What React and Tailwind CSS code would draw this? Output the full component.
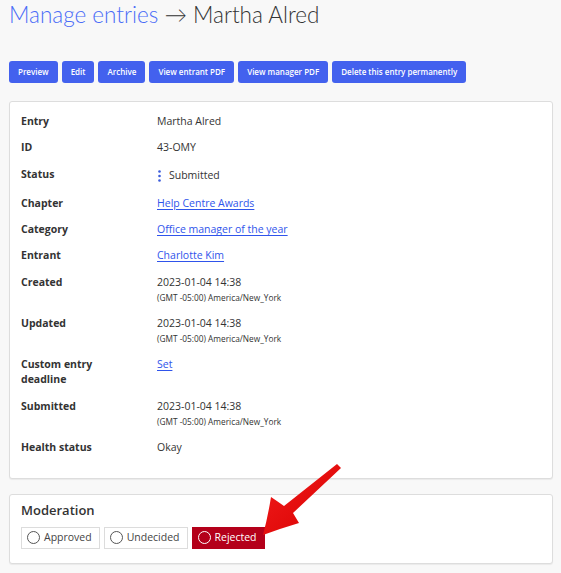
import React from 'react';

const rows = [
  { label: 'Entry', value: 'Martha Alred' },
  { label: 'ID', value: '43-OMY' },
  { label: 'Status', status: 'Submitted' },
  { label: 'Chapter', link: 'Help Centre Awards' },
  { label: 'Category', link: 'Office manager of the year' },
  { label: 'Entrant', link: 'Charlotte Kim' },
  { label: 'Created', date: '2023-01-04 14:38' },
  { label: 'Updated', date: '2023-01-04 14:38' },
  { label: 'Custom entry deadline', link: 'Set' },
  { label: 'Submitted', date: '2023-01-04 14:38' },
  { label: 'Health status', value: 'Okay' },
];

const buttons = ['Preview', 'Edit', 'Archive', 'View entrant PDF', 'View manager PDF', 'Delete this entry permanently'];

function Value({ row }) {
  if (row.status) {
    return (
      <div className="flex items-center h-[18px] gap-[8px]">
        <svg width="3" height="12" viewBox="0 0 3 12" className="ml-[1px]">
          <circle cx="1.5" cy="1.5" r="1.3" fill="#3b5bdb" />
          <circle cx="1.5" cy="6" r="1.3" fill="#3b5bdb" />
          <circle cx="1.5" cy="10.5" r="1.3" fill="#3b5bdb" />
        </svg>
        <span>{row.status}</span>
      </div>
    );
  }
  if (row.link) {
    return <a href="#" className="text-[#2f54eb] underline underline-offset-[2px]">{row.link}</a>;
  }
  if (row.date) {
    return (
      <div>
        <div>{row.date}</div>
        <div className="text-[8.3px] leading-[15px]">(GMT -05:00) America/New_York</div>
      </div>
    );
  }
  return <div>{row.value}</div>;
}

function Radio({ label, active }) {
  return (
    <label
      className={`flex items-center gap-[4px] h-[22px] pl-[5px] pr-[7px] border text-[10.5px] ${
        active ? 'bg-[#b4001a] border-[#b4001a] text-white' : 'bg-white border-[#dcdcdc] text-[#444]'
      }`}
    >
      <span className={`w-[13px] h-[13px] rounded-full border ${active ? 'border-white' : 'border-[#555]'}`} />
      {label}
    </label>
  );
}

export default function App() {
  return (
    <div className="relative min-h-[573px] bg-[#f8f8f8] px-[9px] pr-[8px] text-[#333]" style={{ fontFamily: '"Open Sans", sans-serif' }}>
      <h1 className="text-[22.5px] leading-[30px] font-light" style={{ fontFamily: 'Lato, "Open Sans", sans-serif' }}>
        <a href="#" className="text-[#4a6cf7]">Manage entries</a>
        <span className="text-[#333]"> → Martha Alred</span>
      </h1>

      <div className="flex gap-[4px] mt-[31px]">
        {buttons.map(b => (
          <button key={b} className="h-[22px] px-[9px] rounded-[3px] bg-[#4361ee] text-white text-[8px] font-semibold">
            {b}
          </button>
        ))}
      </div>

      <div className="mt-[18px] bg-white border border-[#dddddd] rounded-[3px] shadow-[0_1px_1px_rgba(0,0,0,0.06)] pl-[11px] pt-[12px] pb-[23px]">
        <div className="grid grid-cols-[136px_1fr] gap-y-[11.3px] text-[10.5px] leading-[15px]">
          {rows.map(r => (
            <React.Fragment key={r.label}>
              <div className="font-bold w-[110px]">{r.label}</div>
              <Value row={r} />
            </React.Fragment>
          ))}
        </div>
      </div>

      <div className="mt-[15px] bg-white border border-[#dddddd] rounded-[3px] shadow-[0_1px_1px_rgba(0,0,0,0.06)] pl-[11px] pt-[6px] pb-[14px]">
        <div className="text-[13px] leading-[18px] font-semibold">Moderation</div>
        <div className="flex gap-[4px] mt-[8px]">
          <Radio label="Approved" />
          <Radio label="Undecided" />
          <Radio label="Rejected" active />
        </div>
      </div>

      <svg className="absolute left-0 top-0 pointer-events-none" width="561" height="573">
        <defs>
          <linearGradient id="arr" x1="0" y1="0" x2="1" y2="1">
            <stop offset="0" stopColor="#f21d1d" />
            <stop offset="1" stopColor="#d80000" />
          </linearGradient>
        </defs>
        <path
          d="M337 464 L341 468 L293 513 Q296 518 299 523 Q282 528 263 535 Q268 516 271 497 Q277 501 284 506 Z"
          fill="url(#arr)"
        />
      </svg>
    </div>
  );
}
